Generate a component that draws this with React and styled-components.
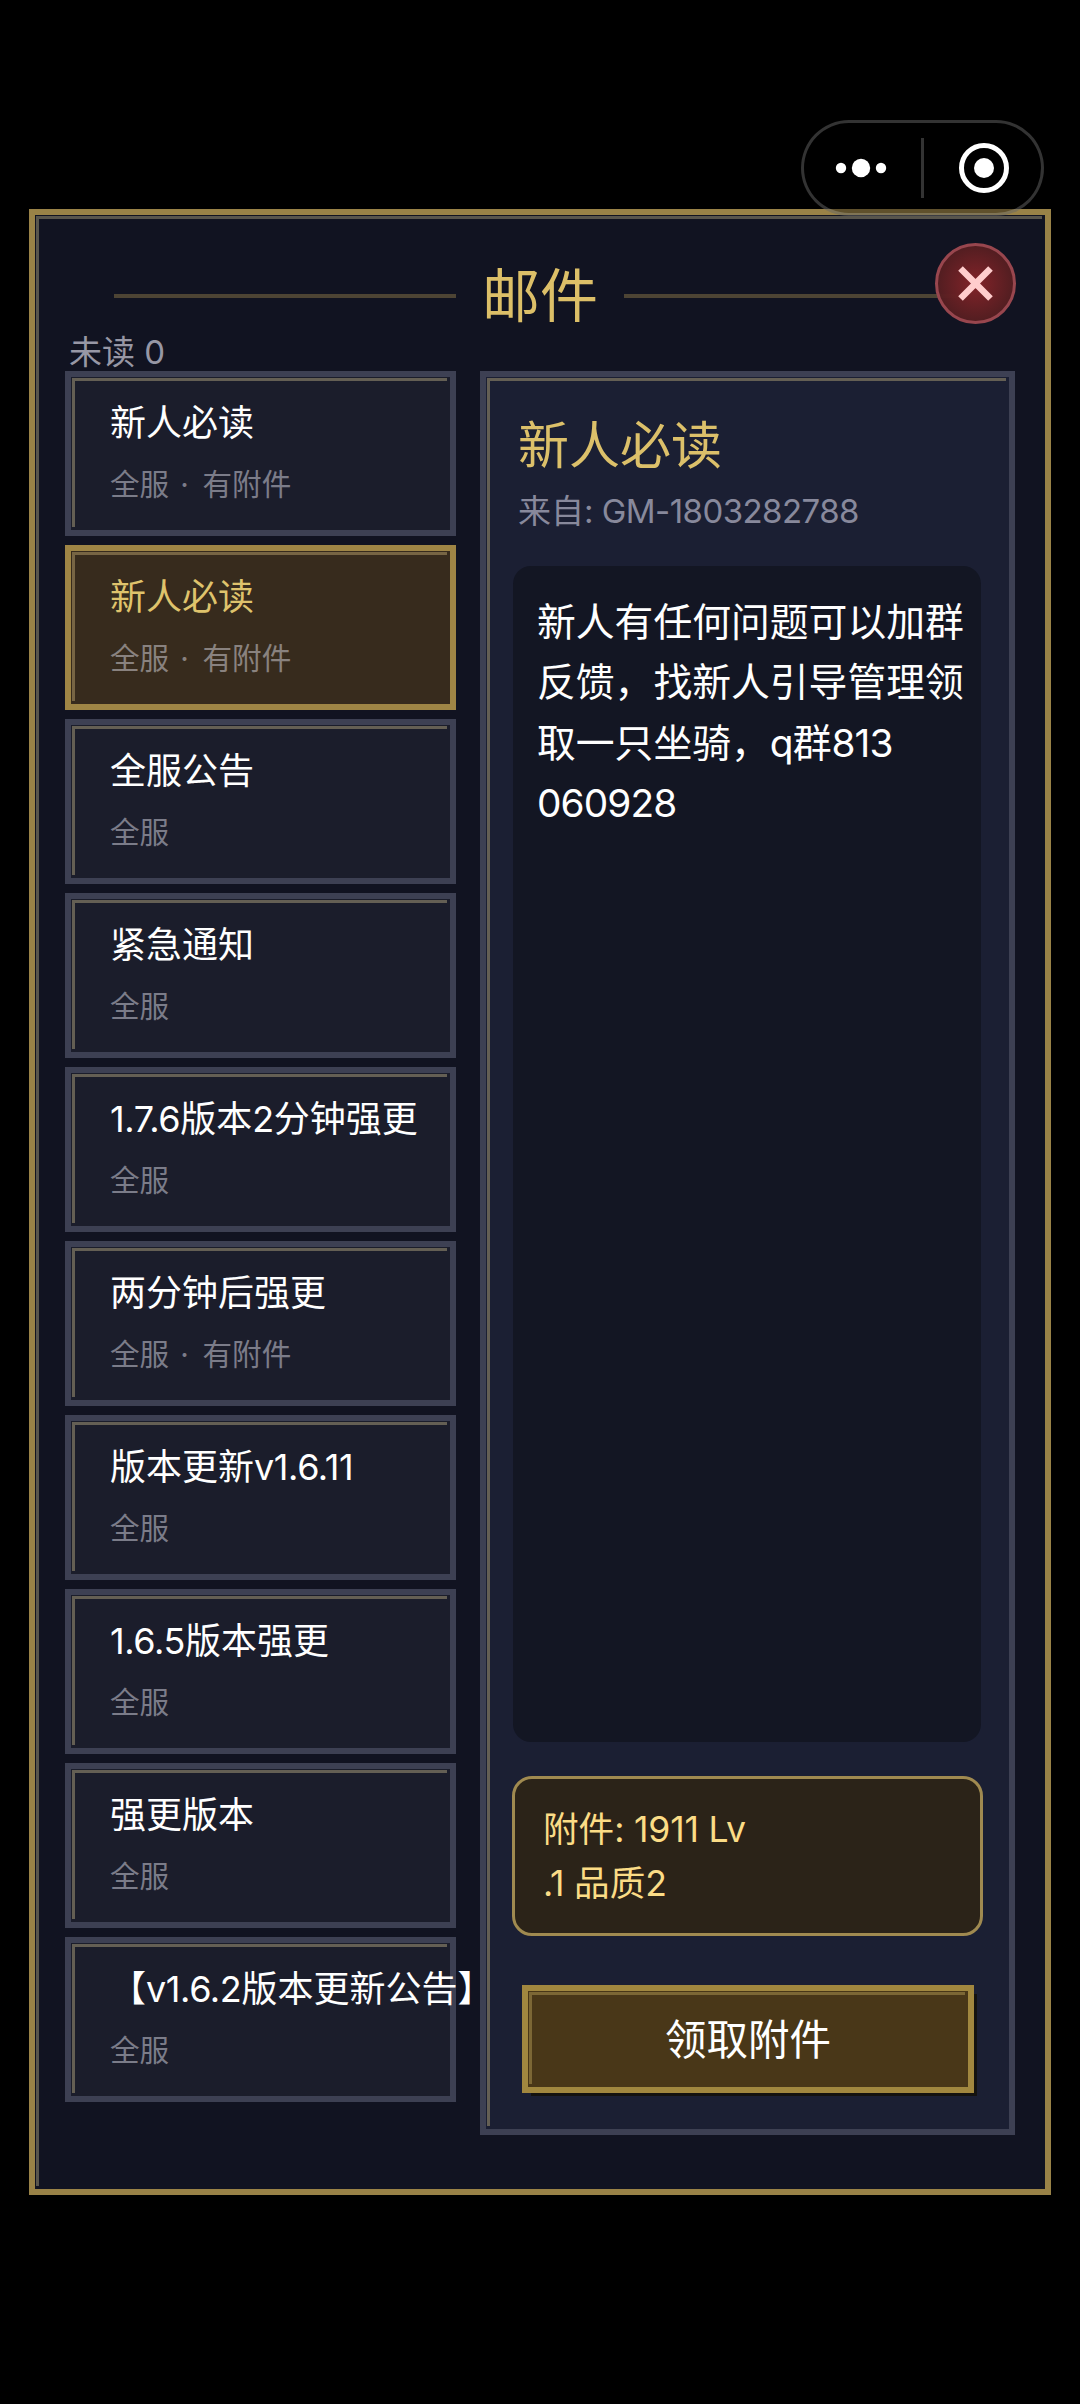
import React, { useState } from "react";
import styled, { createGlobalStyle, css } from "styled-components";

const GlobalStyle = createGlobalStyle`
    * {
        box-sizing: border-box;
    }
    body {
        margin: 0;
        background: #000000;
        font-family: Inter, "Noto Sans CJK SC", sans-serif;
    }
`;

/* thin highlight along the top and left inner edges */
const bevel = css`
    position: relative;
    &::before {
        content: "";
        position: absolute;
        top: 1px;
        left: 1px;
        right: 3px;
        bottom: 3px;
        border-top: 3px solid ${(p) => p.$shine || "#645f54"};
        border-left: 3px solid ${(p) => p.$shine || "#645f54"};
        pointer-events: none;
    }
`;

const Page = styled.div`
    position: relative;
    width: 1080px;
    height: 2404px;
    padding: 209px 29px;
    background: #000000;
`;

const Frame = styled.div`
    ${bevel}
    display: flex;
    flex-direction: column;
    height: 1986px;
    padding: 51px 30px 54px 30px;
    border: 6px solid #998247;
    background: #111321;
`;

const Header = styled.div`
    display: flex;
    align-items: center;
    justify-content: center;
    gap: 26px;
    height: 60px;
    padding: 0 49px;
`;

const Line = styled.div`
    flex: 1;
    height: 4px;
    background: #4d4434;
`;

const Heading = styled.h1`
    margin: 0;
    width: 116px;
    font-size: 58px;
    font-weight: 400;
    line-height: 60px;
    color: #dcbf68;
    white-space: nowrap;
`;

const CloseButton = styled.button`
    position: absolute;
    top: 28px;
    right: 29px;
    width: 81px;
    height: 81px;
    padding: 0;
    border: 3px solid #98464e;
    border-radius: 50%;
    background: radial-gradient(circle, #832329 0%, rgba(86, 30, 33, 0.96) 70%);
    cursor: pointer;
`;

const Unread = styled.div`
    height: 34px;
    margin: 9px 0 2px 4px;
    font-size: 33px;
    line-height: 34px;
    color: #9797a5;
`;

const Columns = styled.div`
    display: flex;
    gap: 24px;
    flex: 1;
`;

const List = styled.div`
    display: flex;
    flex-direction: column;
    gap: 9px;
    width: 391px;
`;

const Card = styled.div`
    ${bevel}
    height: 165px;
    padding: 26px 0 0 39px;
    border: 6px solid ${(p) => (p.$active ? "#9f8545" : "#3d4053")};
    background: ${(p) => (p.$active ? "#372b1d" : "#1b1d2b")};
    color: ${(p) => (p.$active ? "#dfc36c" : "#ffffff")};
    cursor: pointer;
`;

const CardTitle = styled.div`
    font-size: 36px;
    line-height: 40px;
    white-space: nowrap;
`;

const CardMeta = styled.div`
    margin-top: 24px;
    font-size: 29.6px;
    line-height: 35px;
    color: ${(p) => (p.$active ? "#89827f" : "#7b7c89")};
    white-space: pre;
`;

const Panel = styled.div`
    ${bevel}
    display: flex;
    flex-direction: column;
    width: 535px;
    height: 1764px;
    padding: 42px 26px 36px 26px;
    border: 6px solid #3d4053;
    background: #1b1f33;
`;

const MailTitle = styled.div`
    padding-left: 6px;
    font-size: 51px;
    line-height: 54px;
    color: #dcc06a;
`;

const Sender = styled.div`
    margin-top: 16px;
    padding-left: 6px;
    font-size: 33px;
    line-height: 44px;
    color: #88899c;
    white-space: nowrap;
`;

const Body = styled.div`
    height: 1176px;
    margin: 33px 2px 0 1px;
    padding: 26px 0 0 24px;
    border-radius: 18px;
    background: #131623;
    font-size: 38.8px;
    line-height: 60.3px;
    color: #ffffff;
    white-space: pre;
`;

const Attachment = styled.div`
    height: 160px;
    margin-top: 34px;
    padding: 24px 0 0 28px;
    border: 3px solid #a08a50;
    border-radius: 20px;
    background: #2b2318;
    font-size: 35.6px;
    line-height: 54px;
    color: #fbdc86;
    white-space: pre;
`;

const ClaimButton = styled.button`
    ${bevel}
    width: 452px;
    height: 108px;
    margin: 49px 0 0 10px;
    padding: 0 0 4px;
    border: 6px solid #a1873f;
    background: #493718;
    box-shadow: 6px 6px 0 -3px #14120f;
    font-family: inherit;
    font-size: 41.5px;
    color: #ffffff;
    cursor: pointer;
`;

const Latin = styled.span`
    letter-spacing: ${(p) => p.$track}px;
`;

const Capsule = styled.div`
    position: absolute;
    top: 120px;
    left: 801px;
    display: flex;
    width: 243px;
    height: 96px;
    border: 3px solid rgba(255, 255, 255, 0.2);
    border-radius: 48px;
    background: rgba(0, 0, 0, 0.38);
`;

const mails = [
    { title: "新人必读", meta: "全服 · 有附件" },
    { title: "新人必读", meta: "全服 · 有附件" },
    { title: "全服公告", meta: "全服" },
    { title: "紧急通知", meta: "全服" },
    { title: "1.7.6版本2分钟强更", meta: "全服" },
    { title: "两分钟后强更", meta: "全服 · 有附件" },
    { title: "版本更新v1.6.11", meta: "全服" },
    { title: "1.6.5版本强更", meta: "全服" },
    { title: "强更版本", meta: "全服" },
    { title: "【v1.6.2版本更新公告】", meta: "全服" },
];

const message = [
    "新人有任何问题可以加群",
    "反馈，找新人引导管理领",
    "取一只坐骑，q群813",
    "060928",
];

const attachment = ["附件: 1911 Lv", ".1 品质2"];

// latin runs get their own tracking next to the chinese text
const Mixed = ({ text, track = -0.4 }) =>
    text.split(/([\w.:\- ·]+)/).map((part, i) =>
        i % 2 ? <Latin key={i} $track={track}>{part}</Latin> : part
    );

const App = () => {
    const [selected, setSelected] = useState(1);

    return (
        <Page>
            <GlobalStyle />
            <Frame $shine="#58554d">
                <Header>
                    <Line />
                    <Heading>邮件</Heading>
                    <Line />
                </Header>
                <Unread>未读 0</Unread>
                <Columns>
                    <List>
                        {mails.map((mail, i) => (
                            <Card
                                key={i}
                                $active={i === selected}
                                $shine={i === selected ? "#776544" : undefined}
                                onClick={() => setSelected(i)}
                            >
                                <CardTitle><Mixed text={mail.title} /></CardTitle>
                                <CardMeta $active={i === selected}>
                                    <Mixed text={mail.meta} track={2.7} />
                                </CardMeta>
                            </Card>
                        ))}
                    </List>
                    <Panel>
                        <MailTitle>新人必读</MailTitle>
                        <Sender><Mixed text="来自: GM-1803282788" track={-0.55} /></Sender>
                        <Body>
                            {message.map((line) => (
                                <div key={line}><Mixed text={line} track={-0.9} /></div>
                            ))}
                        </Body>
                        <Attachment>
                            {attachment.map((line) => (
                                <div key={line}><Mixed text={line} track={-0.2} /></div>
                            ))}
                        </Attachment>
                        <ClaimButton $shine="#7c6735">领取附件</ClaimButton>
                    </Panel>
                </Columns>
                <CloseButton aria-label="关闭">
                    <svg width="75" height="75" viewBox="0 0 75 75" style={{ display: "block" }}>
                        <path d="M22.5 22.5L52.5 52.5M52.5 22.5L22.5 52.5" stroke="#ffcdcd" strokeWidth="6.5" />
                    </svg>
                </CloseButton>
            </Frame>
            <Capsule>
                <svg width="237" height="90" viewBox="0 0 237 90">
                    <g fill="#ffffff">
                        <circle cx="37" cy="45" r="5.2" />
                        <circle cx="57" cy="45" r="9.2" />
                        <circle cx="77" cy="45" r="5.2" />
                        <circle cx="180" cy="45" r="10" />
                    </g>
                    <circle cx="180" cy="45" r="22.5" fill="none" stroke="#ffffff" strokeWidth="5" />
                    <path d="M118.5 15V75" stroke="#333333" strokeWidth="3" />
                </svg>
            </Capsule>
        </Page>
    );
};

export default App;
